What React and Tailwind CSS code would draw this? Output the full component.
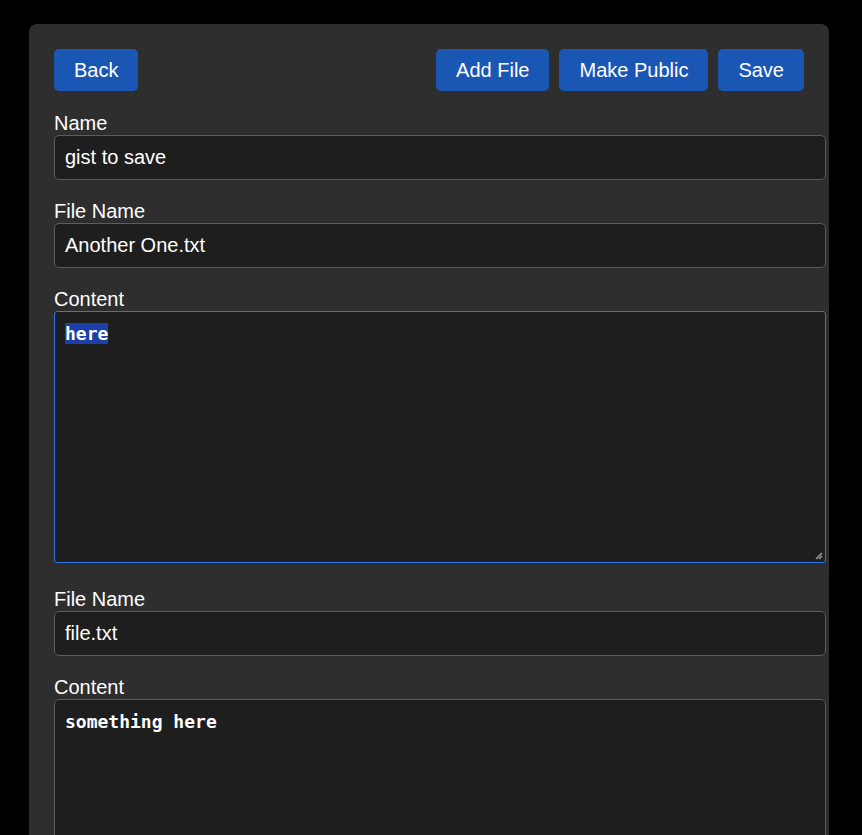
export default function App() {
  const field = 'block w-[772px] h-[45px] px-[10px] bg-[#1e1e1e] border border-[#5c5c5c] rounded-[5px] text-[20px] leading-[23px] text-white flex items-center'
  const label = 'block text-[20px] leading-[23px] text-white'
  const btn = 'h-[42px] px-[20px] bg-[#1a57b5] text-white text-[20px] rounded-[5px]'

  return (
    <div className="min-h-[835px] bg-black pt-[24px] pl-[29px] font-['Liberation_Sans',Arial,sans-serif] overflow-hidden h-[835px]">
      <div className="w-[800px] min-h-[900px] bg-[#2e2e2e] rounded-[8px] px-[25px] pt-[25px]">
        <div className="flex justify-between mb-[21px]">
          <button className={btn}>Back</button>
          <div className="flex gap-[10px]">
            <button className={btn}>Add File</button>
            <button className={btn}>Make Public</button>
            <button className={btn}>Save</button>
          </div>
        </div>

        <label className={label}>Name</label>
        <div className={field}>gist to save</div>

        <label className={label + ' mt-[20px]'}>File Name</label>
        <div className={field}>Another One.txt</div>

        <label className={label + ' mt-[20px]'}>Content</label>
        <div className="relative w-[772px] h-[252px] px-[10px] pt-[11px] bg-[#1e1e1e] border border-[#2f74e8] rounded-[3px] font-['DejaVu_Sans_Mono',monospace] font-bold text-[18px] leading-[22px] text-white">
          <span className="bg-[#1c3fa8]">here</span>
          <svg className="absolute right-[2px] bottom-[2px]" width="9" height="9" viewBox="0 0 9 9">
            <path d="M8 2 L2 8 M8 5 L5 8" stroke="#9a9a9a" strokeWidth="1.5" />
          </svg>
        </div>

        <label className={label + ' mt-[25px]'}>File Name</label>
        <div className={field}>file.txt</div>

        <label className={label + ' mt-[20px]'}>Content</label>
        <div className="w-[772px] h-[252px] px-[10px] pt-[11px] bg-[#1e1e1e] border border-[#5c5c5c] rounded-[5px] font-['DejaVu_Sans_Mono',monospace] font-bold text-[18px] leading-[22px] text-white">
          something here
        </div>
      </div>
    </div>
  )
}
